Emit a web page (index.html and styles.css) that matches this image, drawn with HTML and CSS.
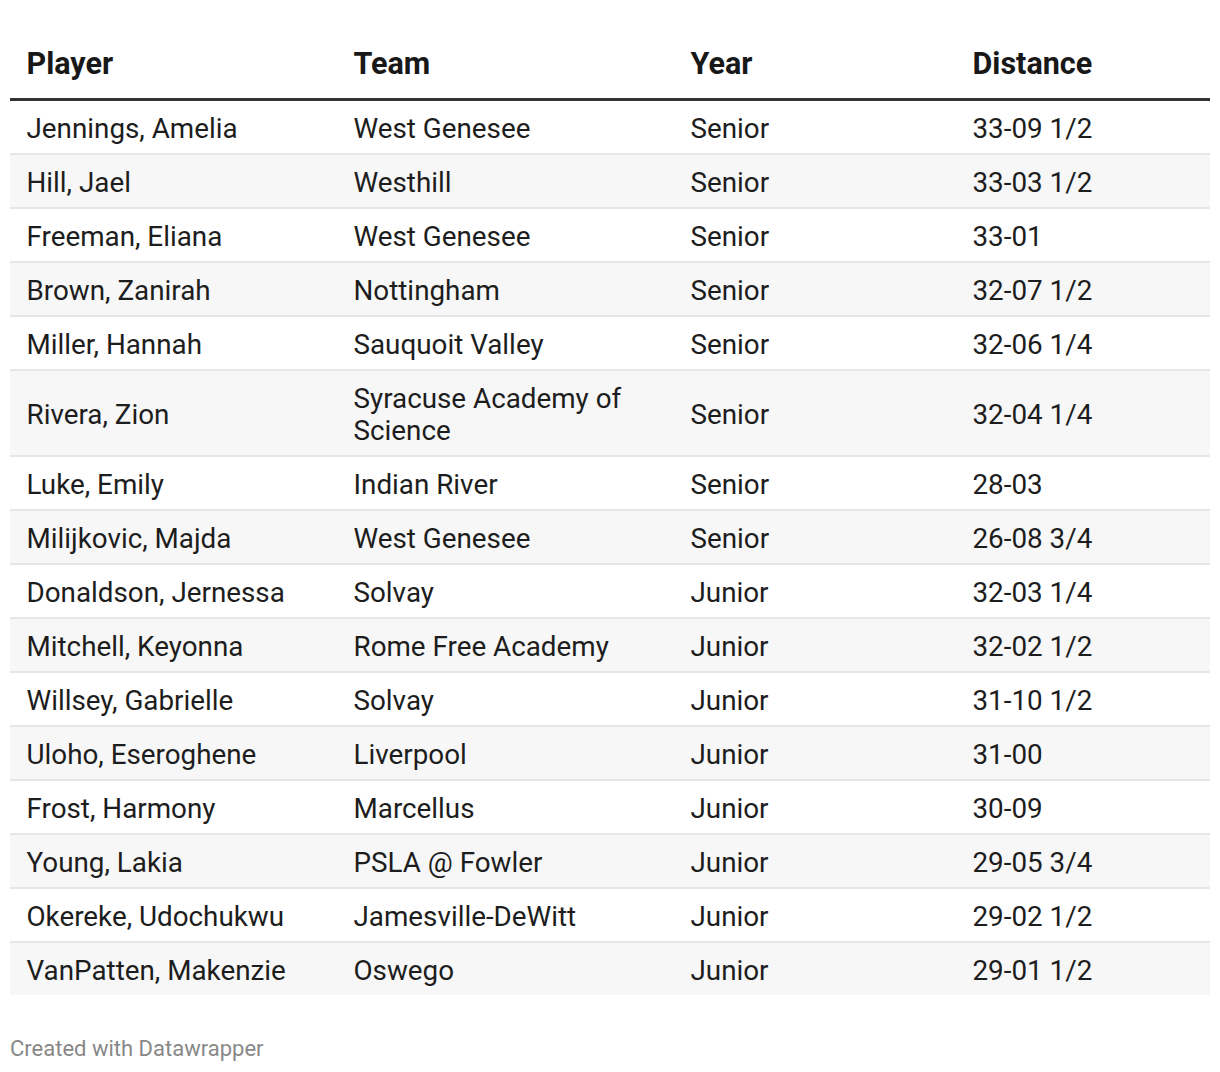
FILE: index.html
```html
<!DOCTYPE html>
<html>
<head>
<meta charset="utf-8">
<link rel="stylesheet" href="styles.css">
</head>
<body>
<div class="chart">
  <table class="tbl">
    <colgroup>
      <col class="c1"><col class="c2"><col class="c3"><col class="c4">
    </colgroup>
    <thead>
      <tr><th>Player</th><th>Team</th><th>Year</th><th>Distance</th></tr>
    </thead>
    <tbody>
      <tr><td>Jennings, Amelia</td><td>West Genesee</td><td>Senior</td><td>33-09 1/2</td></tr>
      <tr><td>Hill, Jael</td><td>Westhill</td><td>Senior</td><td>33-03 1/2</td></tr>
      <tr><td>Freeman, Eliana</td><td>West Genesee</td><td>Senior</td><td>33-01</td></tr>
      <tr><td>Brown, Zanirah</td><td>Nottingham</td><td>Senior</td><td>32-07 1/2</td></tr>
      <tr><td>Miller, Hannah</td><td>Sauquoit Valley</td><td>Senior</td><td>32-06 1/4</td></tr>
      <tr><td>Rivera, Zion</td><td>Syracuse Academy of Science</td><td>Senior</td><td>32-04 1/4</td></tr>
      <tr><td>Luke, Emily</td><td>Indian River</td><td>Senior</td><td>28-03</td></tr>
      <tr><td>Milijkovic, Majda</td><td>West Genesee</td><td>Senior</td><td>26-08 3/4</td></tr>
      <tr><td>Donaldson, Jernessa</td><td>Solvay</td><td>Junior</td><td>32-03 1/4</td></tr>
      <tr><td>Mitchell, Keyonna</td><td>Rome Free Academy</td><td>Junior</td><td>32-02 1/2</td></tr>
      <tr><td>Willsey, Gabrielle</td><td>Solvay</td><td>Junior</td><td>31-10 1/2</td></tr>
      <tr><td>Uloho, Eseroghene</td><td>Liverpool</td><td>Junior</td><td>31-00</td></tr>
      <tr><td>Frost, Harmony</td><td>Marcellus</td><td>Junior</td><td>30-09</td></tr>
      <tr><td>Young, Lakia</td><td>PSLA @ Fowler</td><td>Junior</td><td>29-05 3/4</td></tr>
      <tr><td>Okereke, Udochukwu</td><td>Jamesville-DeWitt</td><td>Junior</td><td>29-02 1/2</td></tr>
      <tr><td>VanPatten, Makenzie</td><td>Oswego</td><td>Junior</td><td>29-01 1/2</td></tr>
    </tbody>
  </table>
  <div class="footer">Created with Datawrapper</div>
</div>
</body>
</html>
```

FILE: styles.css
```css
html, body {
  margin: 0;
  padding: 0;
  background: #fff;
}
.chart {
  padding: 10px 10px 0 10px;
  font-family: Roboto, "Liberation Sans", sans-serif;
  color: #1d1d1d;
}
.tbl {
  width: 1200px;
  border-collapse: collapse;
  table-layout: fixed;
}
.c1 { width: 327px; }
.c2 { width: 337px; }
.c3 { width: 282px; }
.c4 { width: 254px; }
.tbl th {
  text-align: left;
  font-weight: 700;
  font-size: 30.5px;
  line-height: 36px;
  color: #181818;
  padding: 36px 17px 16px 16.5px;
  border-bottom: 3px solid #333;
}
.tbl td {
  font-size: 27.8px;
  line-height: 32px;
  padding: 12px 17px 8px 16.5px;
  border-bottom: 2px solid #e6e6e6;
  vertical-align: middle;
}
.tbl tbody tr:nth-child(even) td {
  background: #f7f7f7;
}
.tbl tbody tr:last-child td {
  border-bottom: none;
}
.footer {
  margin-top: 41px;
  font-size: 22px;
  line-height: 26px;
  color: #888;
}
```
